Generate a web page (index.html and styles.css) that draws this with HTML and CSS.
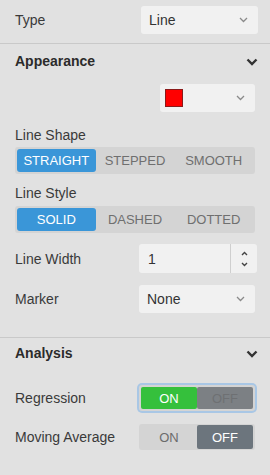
FILE: index.html
```html
<!DOCTYPE html>
<html lang="en">
<head>
    <meta charset="UTF-8">
    <meta name="viewport" content="width=device-width, initial-scale=1.0">
    <title>Series Settings</title>
    <link rel="stylesheet" href="styles.css">
</head>
<body>
    <main class="panel">
        <section class="section section-top">
            <div class="row">
                <span class="label">Type</span>
                <div class="select type-select">
                    <span>Line</span>
                    <svg class="caret" width="9" height="6" viewBox="0 0 9 6"><path d="M1 1 L4.5 4.5 L8 1" /></svg>
                </div>
            </div>
        </section>

        <section class="section section-appearance">
            <div class="section-head">
                <span>Appearance</span>
                <svg class="head-caret" width="12" height="8" viewBox="0 0 12 8"><path d="M1.5 1.5 L6 6 L10.5 1.5" /></svg>
            </div>

            <div class="row row-end color-row">
                <div class="select color-select">
                    <span class="swatch"></span>
                    <svg class="caret" width="9" height="6" viewBox="0 0 9 6"><path d="M1 1 L4.5 4.5 L8 1" /></svg>
                </div>
            </div>

            <div class="field-label shape-label">Line Shape</div>
            <div class="segmented">
                <button class="seg active">Straight</button>
                <button class="seg">Stepped</button>
                <button class="seg">Smooth</button>
            </div>

            <div class="field-label style-label">Line Style</div>
            <div class="segmented">
                <button class="seg active">Solid</button>
                <button class="seg">Dashed</button>
                <button class="seg">Dotted</button>
            </div>

            <div class="row width-row">
                <span class="label">Line Width</span>
                <div class="number">
                    <span class="number-value">1</span>
                    <div class="spin">
                        <svg width="7" height="5" viewBox="0 0 7 5"><path d="M1 4 L3.5 1.5 L6 4" /></svg>
                        <svg width="7" height="5" viewBox="0 0 7 5"><path d="M1 1 L3.5 3.5 L6 1" /></svg>
                    </div>
                </div>
            </div>

            <div class="row marker-row">
                <span class="label">Marker</span>
                <div class="select marker-select">
                    <span>None</span>
                    <svg class="caret" width="9" height="6" viewBox="0 0 9 6"><path d="M1 1 L4.5 4.5 L8 1" /></svg>
                </div>
            </div>
        </section>

        <section class="section section-analysis">
            <div class="section-head">
                <span>Analysis</span>
                <svg class="head-caret" width="12" height="8" viewBox="0 0 12 8"><path d="M1.5 1.5 L6 6 L10.5 1.5" /></svg>
            </div>

            <div class="row regression-row">
                <span class="label">Regression</span>
                <div class="toggle focused">
                    <button class="toggle-btn on active">ON</button>
                    <button class="toggle-btn off">OFF</button>
                </div>
            </div>

            <div class="row average-row">
                <span class="label">Moving Average</span>
                <div class="toggle">
                    <button class="toggle-btn on">ON</button>
                    <button class="toggle-btn off active">OFF</button>
                </div>
            </div>
        </section>
    </main>
</body>
</html>
```

FILE: styles.css
```css
body {
    margin: 0;
    min-height: 100vh;
    background-color: #e1e1e1;
    font-family: "Liberation Sans", Arial, sans-serif;
    font-size: 14px;
    line-height: 16px;
    color: #333;
}

.section {
    padding: 0 15px;
}

.section + .section {
    border-top: 1px solid #c9c9c9;
}

.section-top {
    padding-top: 6px;
    padding-bottom: 9px;
}

.section-appearance {
    padding-bottom: 24px;
}

.section-head {
    display: flex;
    align-items: center;
    justify-content: space-between;
    padding-top: 9px;
    font-weight: bold;
    color: #2b2b2b;
}

.section-analysis .section-head {
    padding-top: 7px;
}

.head-caret {
    margin-right: -3px;
    margin-top: 2px;
}

.head-caret path {
    fill: none;
    stroke: #333;
    stroke-width: 2.4;
}

.row {
    display: flex;
    align-items: center;
    justify-content: space-between;
}

.row-end {
    justify-content: flex-end;
}

.label {
    color: #3a3a3a;
}

/* selects */
.select {
    box-sizing: border-box;
    height: 28px;
    display: flex;
    align-items: center;
    justify-content: space-between;
    padding: 0 10px 0 8px;
    background-color: #f1f1f1;
    border-radius: 3px;
    color: #333;
}

.caret path {
    fill: none;
    stroke: #8a8a8a;
    stroke-width: 1.3;
}

.type-select {
    width: 117px;
    margin-right: -3px;
}

.color-row {
    margin-top: 15px;
}

.color-select {
    width: 95px;
    padding-left: 5px;
}

.swatch {
    width: 16px;
    height: 16px;
    background-color: #ff0000;
    border: 1px solid #8a1a1a;
}

.marker-select {
    width: 116px;
}

/* field labels */
.field-label {
    color: #3a3a3a;
}

.shape-label {
    margin-top: 15px;
}

.style-label {
    margin-top: 11px;
}

/* segmented buttons */
.segmented {
    box-sizing: border-box;
    height: 27px;
    margin-top: 4px;
    padding: 2px;
    display: grid;
    grid-template-columns: repeat(3, 1fr);
    background-color: #d4d4d4;
    border-radius: 3px;
}

.style-label + .segmented {
    margin-top: 5px;
}

.seg {
    border: none;
    border-radius: 3px;
    background: transparent;
    padding: 0;
    font-family: inherit;
    font-size: 13px;
    text-transform: uppercase;
    color: #6f6f6f;
}

.seg.active {
    background-color: #3a96d8;
    color: #fff;
}

/* number input */
.width-row {
    margin-top: 11px;
}

.number {
    box-sizing: border-box;
    width: 118px;
    height: 29px;
    margin-right: -2px;
    display: flex;
    background-color: #f1f1f1;
    border-radius: 3px;
}

.number-value {
    flex: 1;
    display: flex;
    align-items: center;
    padding-left: 9px;
}

.spin {
    width: 26px;
    border-left: 1px solid #cfcfcf;
    display: flex;
    flex-direction: column;
    align-items: center;
    justify-content: center;
    gap: 6px;
}

.spin path {
    fill: none;
    stroke: #444;
    stroke-width: 1.4;
}

.marker-row {
    margin-top: 12px;
}

/* toggles */
.regression-row {
    margin-top: 24px;
}

.average-row {
    margin-top: 13px;
}

.toggle {
    box-sizing: border-box;
    width: 116px;
    height: 26px;
    padding: 1px 2px;
    display: grid;
    grid-template-columns: 1fr 1fr;
    background-color: #d4d4d4;
    border-radius: 3px;
}

.toggle.focused {
    box-shadow: 0 0 0 2px #a9c7e5;
    padding: 2px;
}

.toggle-btn {
    border: none;
    border-radius: 2px;
    padding: 0;
    background: transparent;
    font-family: inherit;
    font-size: 13px;
    color: #6b6b6b;
}

.toggle-btn.on.active {
    background-color: #35c03c;
    color: #fff;
}

.toggle-btn.off.active {
    background-color: #6c757d;
    color: #fff;
}

.focused .toggle-btn.off {
    background-color: #7c8084;
    color: #6e7073;
}
```
